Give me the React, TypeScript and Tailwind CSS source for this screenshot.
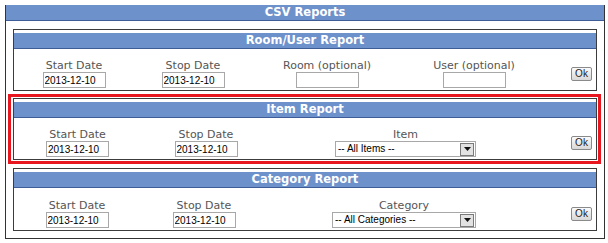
import React from 'react';

const sans = "font-['DejaVu_Sans',Verdana,sans-serif]";

function Label({ children }: { children: React.ReactNode }) {
  return <div className={`${sans} text-[11px] leading-[13px] text-[#555]`}>{children}</div>;
}

function DateInput() {
  return (
    <input
      readOnly
      value="2013-12-10"
      className="block h-[16px] w-[63px] border border-[#a8a8a8] bg-white px-[1px] font-['Liberation_Sans',Arial,sans-serif] text-[10px] leading-[14px] text-black outline-none"
    />
  );
}

function TextInput() {
  return <input readOnly className="block h-[16px] w-[63px] border border-[#a8a8a8] bg-white outline-none" />;
}

function FakeSelect({ label, width }: { label: string; width: string }) {
  return (
    <div className={`flex h-[16px] ${width} items-center border border-[#a8a8a8] bg-white`}>
      <span className="flex-1 pl-[2px] font-['Liberation_Sans',Arial,sans-serif] text-[10px] leading-[14px] text-black">
        {label}
      </span>
      <span className="mr-[1px] flex h-[13px] w-[14px] items-center justify-center border border-[#7a7a7a] bg-[#e2e2e2]">
        <svg width="7" height="4" viewBox="0 0 7 4">
          <polygon points="0,0 7,0 3.5,4" fill="#111" />
        </svg>
      </span>
    </div>
  );
}

function OkButton() {
  return (
    <button className="h-[14px] w-[21px] rounded-[2px] border border-[#8a8a8a] bg-linear-to-b from-[#fbfbfb] to-[#d8d8d8] font-['Liberation_Sans',Arial,sans-serif] text-[10px] leading-[12px] text-[#222]">
      Ok
    </button>
  );
}

function Field({ width, label, children }: { width: string; label: string; children: React.ReactNode }) {
  return (
    <div className={`flex ${width} flex-col items-center`}>
      <Label>{label}</Label>
      {children}
    </div>
  );
}

function ReportBox({ title, top, children }: { title: string; top: string; children: React.ReactNode }) {
  return (
    <div className="border border-[#3c3c3c] pt-[3px]">
      <div className={`${sans} flex h-[16px] items-center justify-center border-b border-[#3d5c98] bg-[#6d92cb] text-[11.5px] font-bold text-white`}>
        {title}
      </div>
      <div className={`flex items-center ${top} pb-[2px]`}>
        {children}
        <div className="flex flex-1 justify-end pr-[4px]">
          <OkButton />
        </div>
      </div>
    </div>
  );
}

export default function App() {
  return (
    <div className="h-[243px] w-[608px] bg-white pl-[5px] pt-[5px]">
      <div className="w-[600px] border-x border-b border-[#333]">
        <div className={`${sans} flex h-[16px] items-center justify-center border-b border-[#3d5c98] bg-[#6d92cb] text-[11.5px] font-bold text-white`}>
          CSV Reports
        </div>

        <div className="px-[7px] pb-[7px] pt-[8px]">
          {/* Room/User */}
          <ReportBox title="Room/User Report" top="pt-[10px]">
            <Field width="w-[120px]" label="Start Date"><DateInput /></Field>
            <Field width="w-[118px]" label="Stop Date"><DateInput /></Field>
            <Field width="w-[150px]" label="Room (optional)"><TextInput /></Field>
            <Field width="w-[144px]" label="User (optional)"><TextInput /></Field>
          </ReportBox>

          {/* Item - highlighted */}
          <div className="-ml-[5px] -mr-[4px] mt-[3px] border-[3px] border-[#e8161e] py-[1px] pl-[2px] pr-[1px]">
            <ReportBox title="Item Report" top="pt-[10px]">
              <Field width="w-[127px]" label="Start Date"><DateInput /></Field>
              <Field width="w-[130px]" label="Stop Date"><DateInput /></Field>
              <Field width="w-[269px]" label="Item"><FakeSelect label="-- All Items --" width="w-[141px]" /></Field>
            </ReportBox>
          </div>

          {/* Category */}
          <div className="mt-[4px]">
            <ReportBox title="Category Report" top="pt-[11px]">
              <Field width="w-[126px]" label="Start Date"><DateInput /></Field>
              <Field width="w-[128px]" label="Stop Date"><DateInput /></Field>
              <Field width="w-[272px]" label="Category"><FakeSelect label="-- All Categories --" width="w-[144px]" /></Field>
            </ReportBox>
          </div>
        </div>
      </div>
    </div>
  );
}
